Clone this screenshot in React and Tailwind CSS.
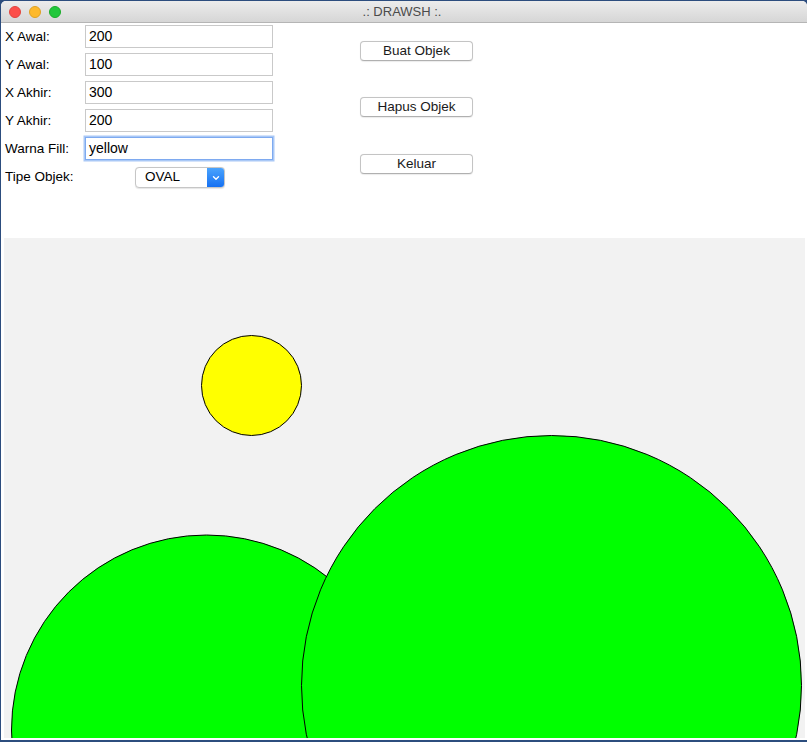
import React from "react";

const font = { fontFamily: '"Liberation Sans", Arial, Helvetica, sans-serif' };

function Field({ label, value, focused }) {
  return (
    <div className="flex items-center h-[23px]">
      <div className="w-[80px] text-[13.5px] text-black leading-none">{label}</div>
      <div
        className={
          "w-[188px] h-[23px] bg-white flex items-center pl-[3px] text-[14px] text-black border " +
          (focused
            ? "border-[#7eaaf0] shadow-[0_0_0_1.5px_#a9c8f6]"
            : "border-[#c9c9c9]")
        }
      >
        {value}
      </div>
    </div>
  );
}

function Btn({ children, className }) {
  return (
    <div
      className={
        "w-[113px] h-[20px] rounded-[4px] border border-[#c4c4c4] border-b-[#b0b0b0] bg-white flex items-center justify-center text-[13.5px] text-[#1a1a1a] shadow-[0_0.5px_1px_rgba(0,0,0,0.08)] " +
        (className || "")
      }
    >
      {children}
    </div>
  );
}

export default function App() {
  return (
    <div className="w-[807px] h-[742px] bg-[#2c4d7e] overflow-hidden" style={font}>
      <div className="ml-[1px] mt-[1px] w-[806px] h-[739px] bg-white rounded-t-[5px] flex flex-col overflow-hidden">
        {/* title bar */}
        <div className="relative h-[22px] shrink-0 bg-gradient-to-b from-[#ececec] to-[#d6d6d6] border-b border-[#b5b5b5] flex items-center pl-[8px] gap-[8px]">
          <div className="w-[12px] h-[12px] rounded-full bg-[#fc4f4a] border border-[#e0443e]" />
          <div className="w-[12px] h-[12px] rounded-full bg-[#fdb92c] border border-[#dea123]" />
          <div className="w-[12px] h-[12px] rounded-full bg-[#22c73c] border border-[#1aab29]" />
          <div className="absolute inset-0 flex items-center justify-center text-[13px] text-[#4b4b4b] pr-[4px]">
            .: DRAWSH :.
          </div>
        </div>

        {/* top panel */}
        <div className="h-[215px] shrink-0 flex pl-[4px]">
          <div className="w-[268px] pt-[2px] flex flex-col gap-[5px]">
            <Field label="X Awal:" value="200" />
            <Field label="Y Awal:" value="100" />
            <Field label="X Akhir:" value="300" />
            <Field label="Y Akhir:" value="200" />
            <Field label="Warna Fill:" value="yellow" focused />
            <div className="flex items-center h-[21px] mt-[2px]">
              <div className="w-[130px] text-[13.5px] text-black">Tipe Objek:</div>
              <div className="w-[90px] h-[21px] rounded-[4px] border border-[#c6c6c6] bg-white flex overflow-hidden shadow-[0_0.5px_1px_rgba(0,0,0,0.1)]">
                <div className="flex-1 flex items-center pl-[9px] text-[13.5px] text-black">OVAL</div>
                <div className="w-[17px] h-full bg-gradient-to-b from-[#4aa3fd] to-[#1570f2] flex items-center justify-center">
                  <svg width="8" height="6" viewBox="0 0 8 6">
                    <path d="M1.5 1.8 L4 4.2 L6.5 1.8" fill="none" stroke="white" strokeWidth="1.4" strokeLinecap="round" strokeLinejoin="round" />
                  </svg>
                </div>
              </div>
            </div>
          </div>
          <div className="ml-[87px] pt-[18px] flex flex-col">
            <Btn>Buat Objek</Btn>
            <Btn className="mt-[36px]">Hapus Objek</Btn>
            <Btn className="mt-[37px]">Keluar</Btn>
          </div>
        </div>

        {/* canvas */}
        <div className="ml-[3px] w-[801px] h-[500px] bg-[#f2f2f2] overflow-hidden shrink-0">
          <svg width="801" height="500" viewBox="0 0 801 500">
            <circle cx="202.5" cy="492" r="195" fill="#00ff00" stroke="#000" strokeWidth="1" />
            <circle cx="547.5" cy="447.5" r="250" fill="#00ff00" stroke="#000" strokeWidth="1" />
            <circle cx="247.5" cy="147.5" r="50" fill="#ffff00" stroke="#000" strokeWidth="1" />
          </svg>
        </div>
      </div>
    </div>
  );
}
